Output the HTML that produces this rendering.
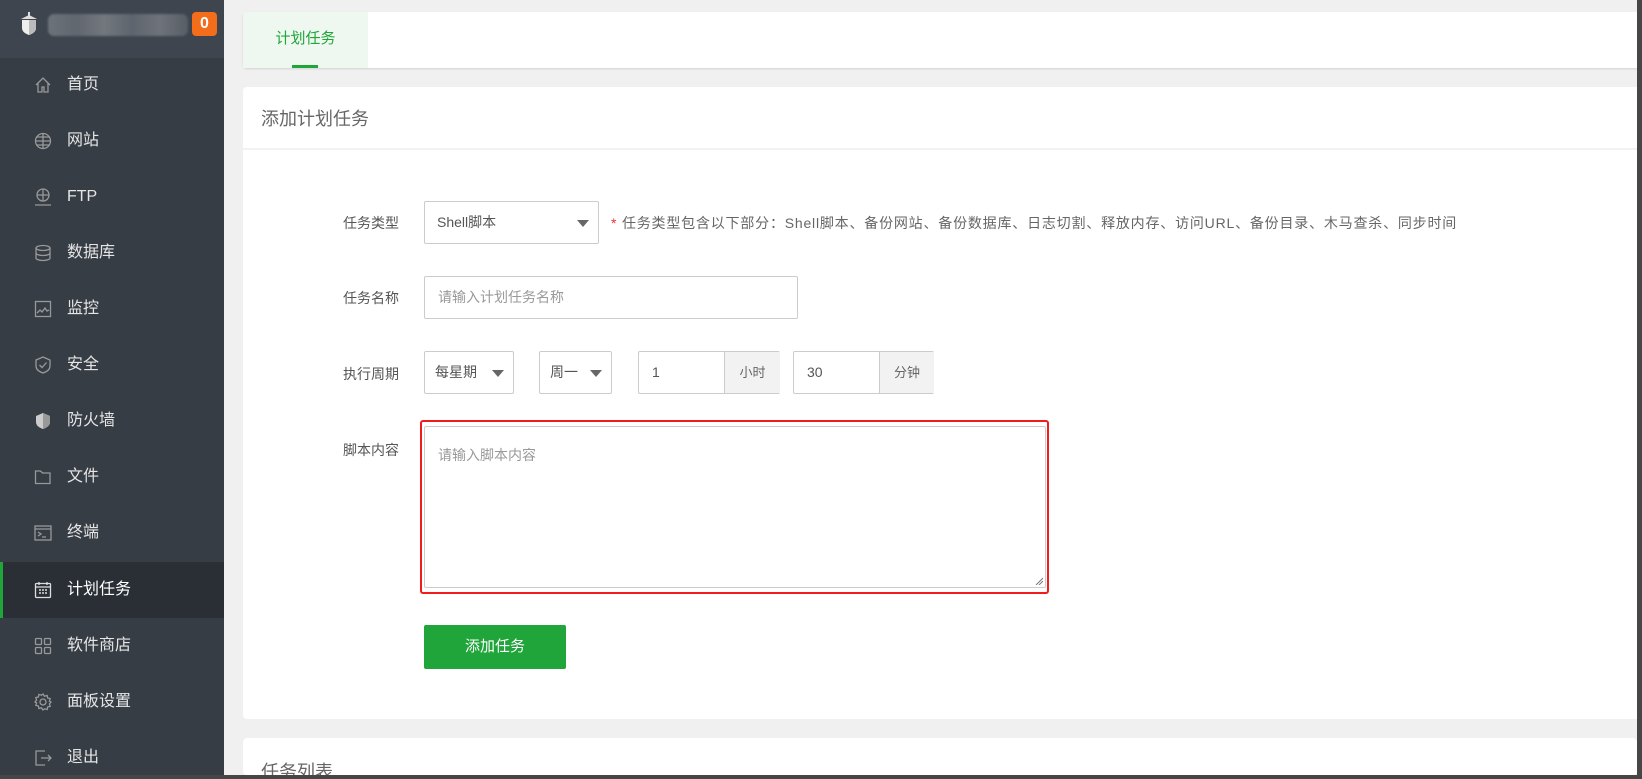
<!DOCTYPE html>
<html style="width:1642px;height:779px;overflow:hidden"><head><meta charset="utf-8"><style>
*{margin:0;padding:0;box-sizing:border-box}
body{width:1642px;height:779px;overflow:hidden;background:#f0f0f0;font-family:"Liberation Sans","Noto Sans CJK SC",sans-serif;position:relative;color:#555}
.side{position:absolute;left:0;top:0;width:224px;height:779px;background:#363d45}
.head{position:absolute;left:0;top:0;width:224px;height:58px;background:#3e454e}
.menu{position:absolute;left:0;width:224px;height:56px;color:#e5e5e5;font-size:16px;line-height:56px;padding-left:67px}
.menu svg{position:absolute;left:34px;top:19px}
.menu.act{background:#2a2f36;color:#fff;border-left:3px solid #20a53a;padding-left:64px}
.menu.act svg{left:31px}
.card{position:absolute;background:#fff;border-radius:4px}
.lbl{position:absolute;font-size:14px;color:#555;width:100px;text-align:right;left:299px}
.box{position:absolute;border:1px solid #ccc;border-radius:2px;background:#fff;font-size:14px;color:#555}
.tri{position:absolute;width:0;height:0;border-left:6px solid transparent;border-right:6px solid transparent;border-top:7px solid #666}
.addon{position:absolute;top:0;bottom:0;background:#f2f2f2;border-left:1px solid #ccc;font-size:13px;color:#666;text-align:center}
</style></head><body>
<div class="side">
<div class="head">
<svg style="position:absolute;left:18px;top:12px" width="22" height="24" viewBox="0 0 22 24"><path d="M4 8h14v8c0 4-4 6-7 7-3-1-7-3-7-7z" fill="#eee"/><path d="M11 8v15c3-1 7-3 7-7V8z" fill="#bbb"/><path d="M3 7l8-4 8 4z" fill="#ddd"/><rect x="10" y="0" width="2" height="4" fill="#ddd"/></svg>
<div style="position:absolute;left:48px;top:14px;width:140px;height:22px;background:linear-gradient(90deg,#7a7f86,#6a6f78,#80858b,#676d76,#7b7f86,#5e646c);opacity:.8;border-radius:6px;filter:blur(1px)"></div>
<div style="position:absolute;left:192px;top:12px;width:25px;height:24px;background:#f46d1b;border-radius:4px;color:#fff;font-weight:bold;font-size:16px;text-align:center;line-height:24px">0</div>
</div>
<div class="menu" style="top:57px"><svg width="18" height="18" viewBox="0 0 18 18" fill="none" stroke="#999" stroke-width="1.3"><path d="M2 9L9 2l7 7M4 7v9h4v-5h2v5h4V7"/></svg>首页</div>
<div class="menu" style="top:113px"><svg width="18" height="18" viewBox="0 0 18 18" fill="none" stroke="#999" stroke-width="1.3"><circle cx="9" cy="9" r="7.5"/><path d="M1.5 9h15M9 1.5v15M3 5h12M3 13h12"/></svg>网站</div>
<div class="menu" style="top:169px"><svg width="18" height="18" viewBox="0 0 18 18" fill="none" stroke="#999" stroke-width="1.3"><circle cx="9" cy="7" r="6"/><path d="M3 7h12M9 1v12M1 17h16"/></svg>FTP</div>
<div class="menu" style="top:225px"><svg width="18" height="18" viewBox="0 0 18 18" fill="none" stroke="#999" stroke-width="1.3"><ellipse cx="9" cy="4" rx="7" ry="2.5"/><path d="M2 4v10c0 1.4 3 2.5 7 2.5s7-1.1 7-2.5V4M2 9c0 1.4 3 2.5 7 2.5s7-1.1 7-2.5"/></svg>数据库</div>
<div class="menu" style="top:281px"><svg width="18" height="18" viewBox="0 0 18 18" fill="none" stroke="#999" stroke-width="1.3"><rect x="1.5" y="1.5" width="15" height="15"/><path d="M3 13l3-3 2 2 3-4 2 3 2-1"/></svg>监控</div>
<div class="menu" style="top:337px"><svg width="18" height="18" viewBox="0 0 18 18" fill="none" stroke="#999" stroke-width="1.3"><path d="M9 1l7 3v6c0 4-4 6-7 7-3-1-7-3-7-7V4z"/><path d="M5.5 9l2.5 2.5 4.5-5"/></svg>安全</div>
<div class="menu" style="top:393px"><svg width="18" height="18" viewBox="0 0 18 18"><path d="M9 1l7 3v6c0 4-4 6-7 7-3-1-7-3-7-7V4z" fill="#ccc"/><path d="M9 1l7 3v6c0 4-4 6-7 7z" fill="#999"/></svg>防火墙</div>
<div class="menu" style="top:449px"><svg width="18" height="18" viewBox="0 0 18 18" fill="none" stroke="#999" stroke-width="1.3"><path d="M1.5 3h5l2 2h7.5v10.5h-14.5z"/></svg>文件</div>
<div class="menu" style="top:505px"><svg width="18" height="18" viewBox="0 0 18 18" fill="none" stroke="#999" stroke-width="1.3"><rect x="1" y="2" width="16" height="14"/><path d="M1 5h16M4 8l3 2-3 2M8 13h4"/></svg>终端</div>
<div class="menu act" style="top:562px"><svg width="18" height="18" viewBox="0 0 18 18" fill="none" stroke="#ddd" stroke-width="1.3"><rect x="1.5" y="2.5" width="15" height="14" rx="1"/><path d="M1.5 6h15M5 1v3M13 1v3"/><path d="M5 9h2M8 9h2M11 9h2M5 12h2M8 12h2M11 12h2" stroke-width="1.6"/></svg>计划任务</div>
<div class="menu" style="top:618px"><svg width="18" height="18" viewBox="0 0 18 18" fill="none" stroke="#999" stroke-width="1.3"><rect x="1.5" y="1.5" width="6" height="6" rx="1"/><rect x="10.5" y="1.5" width="6" height="6" rx="1"/><rect x="1.5" y="10.5" width="6" height="6" rx="1"/><rect x="10.5" y="10.5" width="6" height="6" rx="1"/></svg>软件商店</div>
<div class="menu" style="top:674px"><svg width="18" height="18" viewBox="0 0 18 18" fill="none" stroke="#999" stroke-width="1.3"><circle cx="9" cy="9" r="3"/><path d="M9 1l1.5 2.2 2.6-.8.5 2.6 2.6.6-.8 2.5L17 9l-1.6 1.9.8 2.5-2.6.6-.5 2.6-2.6-.8L9 17l-1.5-2.2-2.6.8-.5-2.6-2.6-.6.8-2.5L1 9l1.6-1.9-.8-2.5 2.6-.6.5-2.6 2.6.8z"/></svg>面板设置</div>
<div class="menu" style="top:730px"><svg width="18" height="18" viewBox="0 0 18 18" fill="none" stroke="#999" stroke-width="1.3"><path d="M11 2H2v14h9M7 9h10M14 6l3 3-3 3"/></svg>退出</div>
</div>

<div class="card" style="left:243px;top:12px;width:1400px;height:56px;box-shadow:0 1px 2px rgba(0,0,0,.12)">
<div style="position:absolute;left:0;top:0;width:125px;height:56px;background:#eef8f0;border-radius:4px 0 0 0;color:#20a53a;font-size:15px;text-align:center;line-height:54px">计划任务</div>
<div style="position:absolute;left:49px;top:53px;width:26px;height:3px;background:#20a53a"></div>
</div>

<div class="card" style="left:243px;top:87px;width:1400px;height:632px">
<div style="position:absolute;left:18px;top:18px;font-size:18px;color:#666">添加计划任务</div>
<div style="position:absolute;left:0;top:61px;width:100%;height:2px;background:#f2f2f2"></div>
</div>

<div class="lbl" style="top:213px">任务类型</div>
<div class="box" style="left:424px;top:201px;width:175px;height:43px;line-height:41px;padding-left:12px">Shell脚本<div class="tri" style="left:152px;top:18px"></div></div>
<div style="position:absolute;left:611px;top:213px;font-size:14px;color:#666;letter-spacing:0.8px;white-space:nowrap"><span style="color:#e33">*</span> 任务类型包含以下部分：Shell脚本、备份网站、备份数据库、日志切割、释放内存、访问URL、备份目录、木马查杀、同步时间</div>

<div class="lbl" style="top:288px">任务名称</div>
<div class="box" style="left:424px;top:276px;width:374px;height:43px;line-height:41px;padding-left:13px;color:#999">请输入计划任务名称</div>

<div class="lbl" style="top:364px">执行周期</div>
<div class="box" style="left:424px;top:351px;width:90px;height:43px;line-height:41px;padding-left:10px">每星期<div class="tri" style="left:67px;top:18px"></div></div>
<div class="box" style="left:539px;top:351px;width:73px;height:43px;line-height:41px;padding-left:10px">周一<div class="tri" style="left:50px;top:18px"></div></div>
<div class="box" style="left:638px;top:351px;width:142px;height:43px;line-height:41px;padding-left:13px">1<div class="addon" style="left:85px;width:56px">小时</div></div>
<div class="box" style="left:793px;top:351px;width:141px;height:43px;line-height:41px;padding-left:13px">30<div class="addon" style="left:85px;width:55px">分钟</div></div>

<div class="lbl" style="top:440px">脚本内容</div>
<div style="position:absolute;left:420px;top:420px;width:629px;height:174px;border:2.5px solid #f21c1c;border-radius:3px"></div>
<div class="box" style="left:424px;top:426px;width:622px;height:162px;padding:18px 13px;color:#999">请输入脚本内容
<svg style="position:absolute;right:2px;bottom:2px" width="8" height="8"><path d="M1 8L8 1M4 8L8 4" stroke="#777"/></svg></div>

<div style="position:absolute;left:424px;top:625px;width:142px;height:44px;background:#20a53a;border-radius:2px;color:#fff;font-size:15px;text-align:center;line-height:44px">添加任务</div>

<div class="card" style="left:243px;top:738px;width:1394px;height:37px;overflow:hidden">
<div style="position:absolute;left:18px;top:20px;font-size:18px;color:#666">任务列表</div>
</div>

<div style="position:absolute;left:1637px;top:0;width:5px;height:779px;background:#464646"></div>
<div style="position:absolute;left:0;top:775px;width:1642px;height:4px;background:#464646"></div>
</body></html>
